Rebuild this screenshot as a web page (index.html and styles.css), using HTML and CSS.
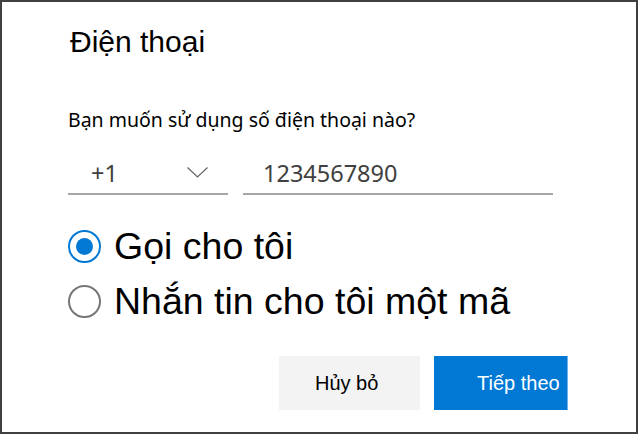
FILE: index.html
```html
<!DOCTYPE html>
<html lang="vi">
  <head>
    <meta charset="UTF-8" />
    <meta name="viewport" content="width=device-width, initial-scale=1.0" />
    <title>Điện thoại</title>
    <link rel="stylesheet" href="styles.css">
  </head>
  <body>
    <div class="dialog">
      <h1 class="title">Điện thoại</h1>
      <p class="prompt">Bạn muốn sử dụng số điện thoại nào?</p>
      <div class="phone-row">
        <div class="country">
          <span>+1</span>
          <svg class="chevron" width="21" height="11" viewBox="0 0 21 11">
            <path d="M0.5 0.5 L10.5 10 L20.5 0.5" fill="none" stroke="#666" stroke-width="1.2" />
          </svg>
        </div>
        <div class="number">1234567890</div>
      </div>
      <div class="options">
        <label class="option">
          <span class="radio checked"></span>
          <span>Gọi cho tôi</span>
        </label>
        <label class="option">
          <span class="radio"></span>
          <span>Nhắn tin cho tôi một mã</span>
        </label>
      </div>
      <div class="actions">
        <button class="btn btn-cancel">Hủy bỏ</button>
        <button class="btn btn-next">Tiếp theo</button>
      </div>
    </div>
  </body>
</html>
```

FILE: styles.css
```css
html, body {
  margin: 0;
  padding: 0;
  background-color: #fff;
}
.dialog {
  box-sizing: border-box;
  width: 638px;
  height: 434px;
  border: 2px solid #404040;
  padding: 0 0 0 66px;
  font-family: "Liberation Sans", Arial, sans-serif;
  color: #000;
}
.title {
  margin: 24px 0 0 2px;
  font-size: 30px;
  font-weight: normal;
  line-height: 32px;
}
.prompt {
  margin: 50px 0 0 0;
  font-family: "Noto Sans", "Open Sans", sans-serif;
  font-size: 19.5px;
  line-height: 24px;
}
.phone-row {
  display: flex;
  gap: 15px;
  margin-top: 20px;
  font-family: "Noto Sans", "Open Sans", sans-serif;
  font-size: 23.5px;
  color: #404040;
}
.country,
.number {
  height: 43px;
  border-bottom: 2px solid #a6a6a6;
  display: flex;
  align-items: center;
  box-sizing: border-box;
}
.country {
  width: 160px;
  padding: 0 20px 0 23px;
  justify-content: space-between;
}
.number {
  width: 310px;
  padding-left: 20px;
}
.chevron {
  display: block;
}
.options {
  margin-top: 34px;
  display: flex;
  flex-direction: column;
  gap: 21px;
}
.option {
  display: flex;
  align-items: center;
  gap: 13px;
  font-size: 37.5px;
  line-height: 34px;
}
.radio {
  box-sizing: border-box;
  width: 33px;
  height: 33px;
  border: 2px solid #767676;
  border-radius: 50%;
  display: flex;
  align-items: center;
  justify-content: center;
}
.radio.checked {
  border-color: #0078d4;
}
.radio.checked::after {
  content: "";
  width: 17px;
  height: 17px;
  border-radius: 50%;
  background-color: #0078d4;
}
.actions {
  display: flex;
  gap: 14px;
  margin: 38px 0 0 211px;
}
.btn {
  height: 54px;
  border: none;
  font-family: "Liberation Sans", Arial, sans-serif;
  font-size: 20px;
  text-align: left;
  cursor: pointer;
}
.btn-cancel {
  width: 141px;
  padding-left: 36px;
  background-color: #f3f3f3;
  color: #000;
}
.btn-next {
  width: 134px;
  padding-left: 43px;
  background-color: #0078d4;
  border-right: 1px solid #6fb3ea;
  color: #fff;
}
```
